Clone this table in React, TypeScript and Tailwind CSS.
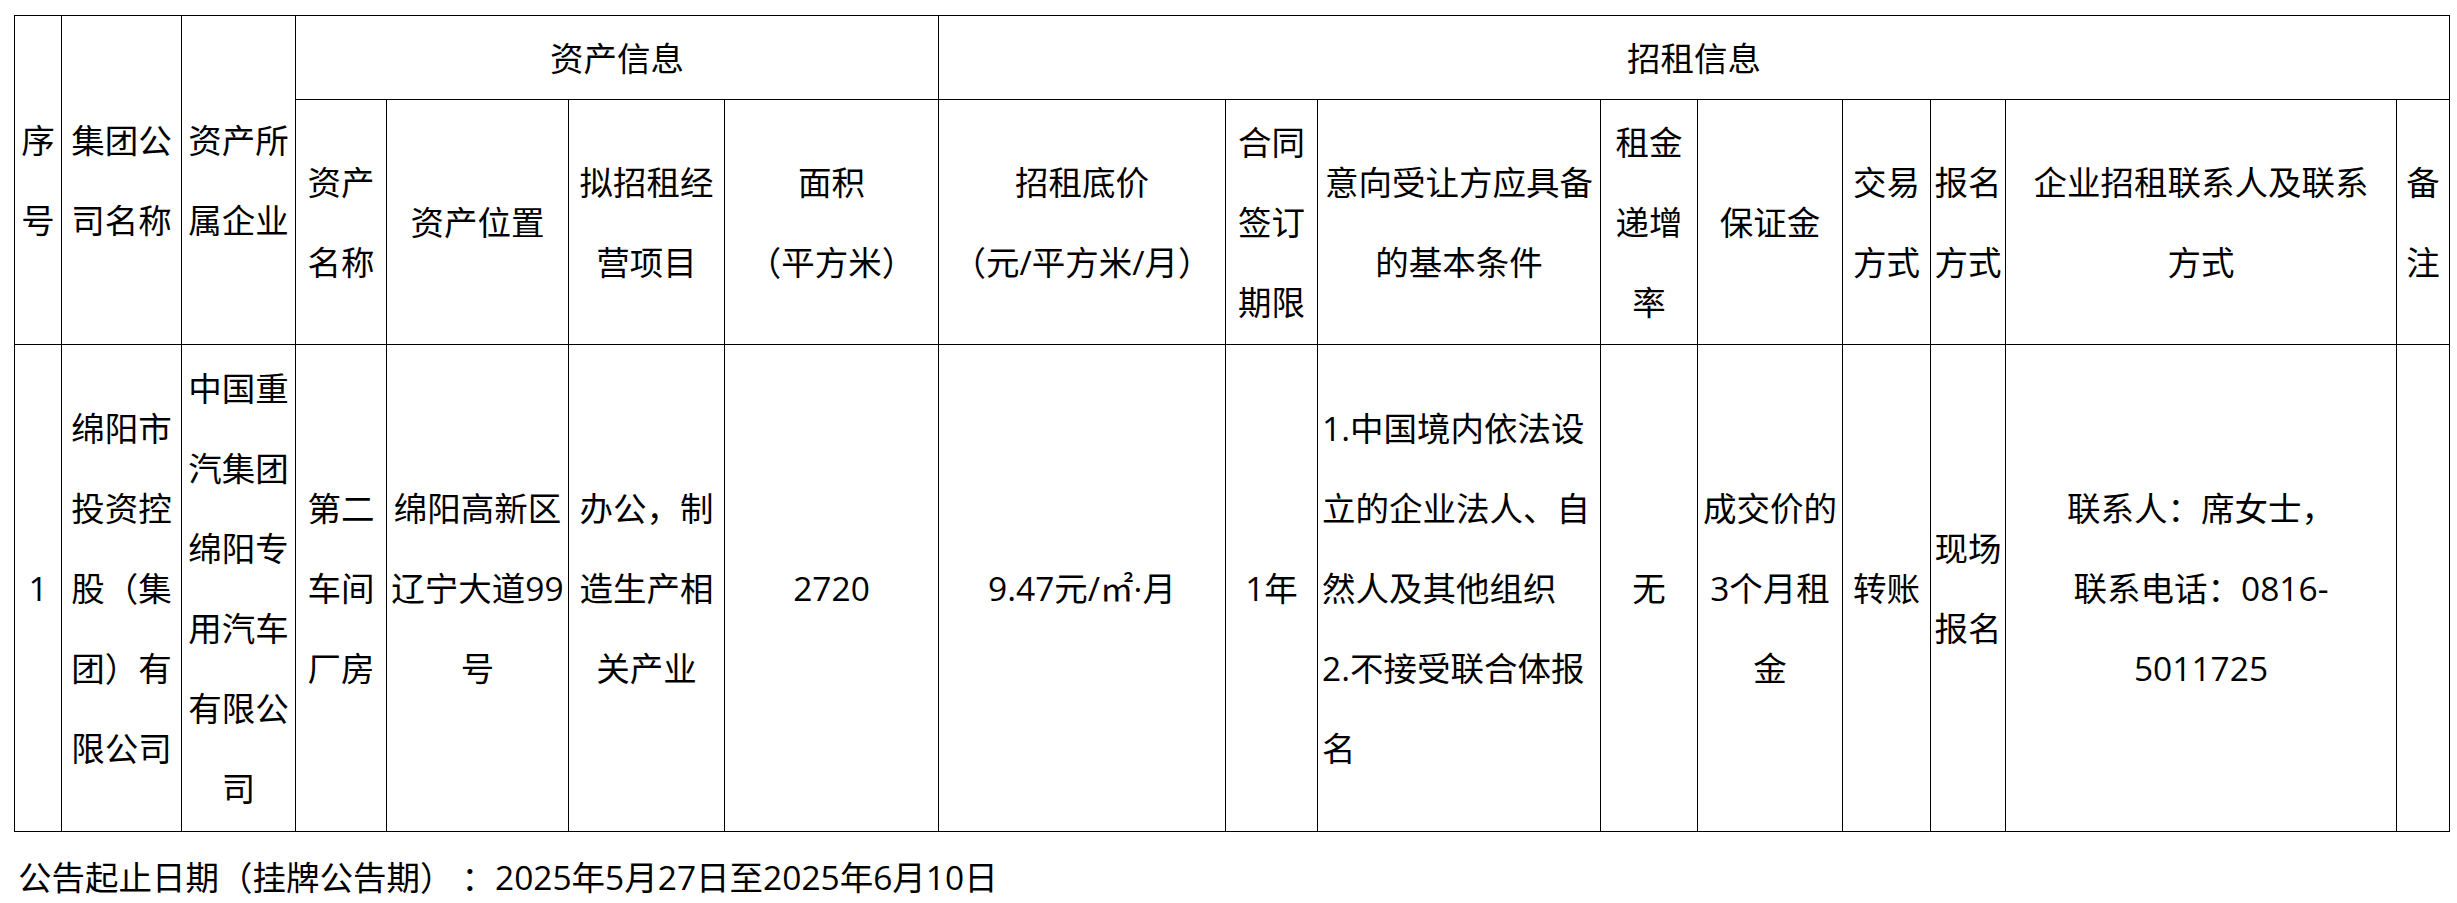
import React from "react";

const FONT = {
  fontFamily: '"Open Sans", "Noto Sans CJK SC", sans-serif',
};

function Cell({
  lines,
  className = "",
  align = "center",
}: {
  lines: string[];
  className?: string;
  align?: "center" | "left";
}) {
  return (
    <div
      className={
        "bg-white flex items-center " +
        (align === "center" ? "justify-center text-center " : "justify-start text-left pl-[4px] ") +
        className
      }
    >
      <div>
        {lines.map((l, i) => (
          <div key={i} className="whitespace-nowrap leading-[80px]">
            {l}
          </div>
        ))}
      </div>
    </div>
  );
}

export default function App() {
  return (
    <div className="bg-white w-[2457px] h-[903px] pl-[14px] pt-[15px] text-black text-[33.5px]" style={FONT}>
      <div className="grid w-fit bg-black p-px gap-px grid-cols-[46px_119px_113px_90px_181px_155px_213px_286px_91px_282px_96px_144px_87px_74px_390px_52px] grid-rows-[83px_244px_486px]">
        {/* Row 1 */}
        <Cell className="row-span-2" lines={["序", "号"]} />
        <Cell className="row-span-2" lines={["集团公", "司名称"]} />
        <Cell className="row-span-2" lines={["资产所", "属企业"]} />
        <Cell className="col-span-4" lines={["资产信息"]} />
        <Cell className="col-span-9" lines={["招租信息"]} />

        {/* Row 2 */}
        <Cell lines={["资产", "名称"]} />
        <Cell lines={["资产位置"]} />
        <Cell lines={["拟招租经", "营项目"]} />
        <Cell lines={["面积", "（平方米）"]} />
        <Cell lines={["招租底价", "（元/平方米/月）"]} />
        <Cell lines={["合同", "签订", "期限"]} />
        <Cell lines={["意向受让方应具备", "的基本条件"]} />
        <Cell lines={["租金", "递增", "率"]} />
        <Cell lines={["保证金"]} />
        <Cell lines={["交易", "方式"]} />
        <Cell lines={["报名", "方式"]} />
        <Cell lines={["企业招租联系人及联系", "方式"]} />
        <Cell lines={["备", "注"]} />

        {/* Row 3 */}
        <Cell lines={["1"]} />
        <Cell lines={["绵阳市", "投资控", "股（集", "团）有", "限公司"]} />
        <Cell lines={["中国重", "汽集团", "绵阳专", "用汽车", "有限公", "司"]} />
        <Cell lines={["第二", "车间", "厂房"]} />
        <Cell lines={["绵阳高新区", "辽宁大道99", "号"]} />
        <Cell lines={["办公，制", "造生产相", "关产业"]} />
        <Cell lines={["2720"]} />
        <Cell lines={["9.47元/㎡·月"]} />
        <Cell lines={["1年"]} />
        <Cell
          align="left"
          lines={["1.中国境内依法设", "立的企业法人、自", "然人及其他组织", "2.不接受联合体报", "名"]}
        />
        <Cell lines={["无"]} />
        <Cell lines={["成交价的", "3个月租", "金"]} />
        <Cell lines={["转账"]} />
        <Cell lines={["现场", "报名"]} />
        <Cell lines={["联系人：席女士，", "联系电话：0816-", "5011725"]} />
        <Cell lines={[""]} />
      </div>
      <div className="pl-[4px] mt-[5px] leading-[80px] whitespace-nowrap">
        公告起止日期（挂牌公告期）
        <span className="inline-block w-[8px]" />
        ：2025年5月27日至2025年6月10日
      </div>
    </div>
  );
}
